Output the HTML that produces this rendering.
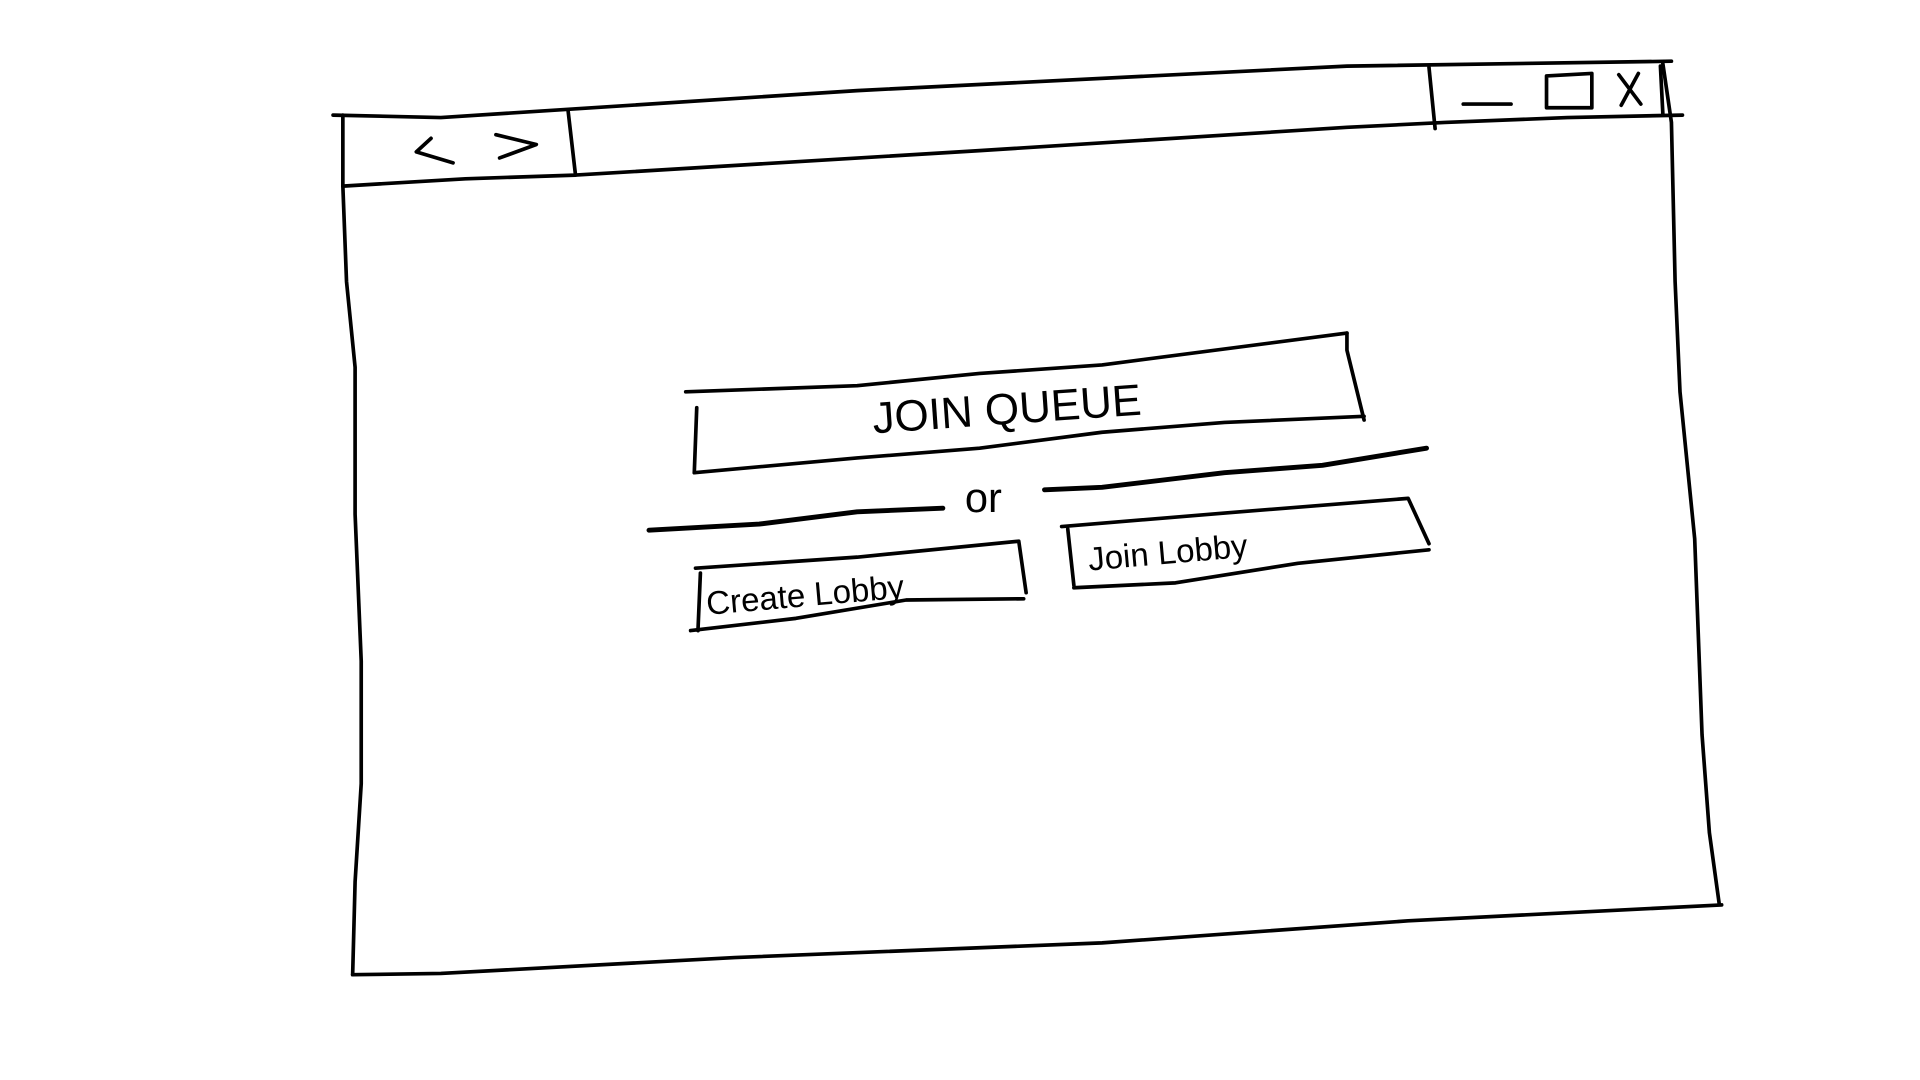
<!DOCTYPE html>
<html><head><meta charset="utf-8"><style>
html,body{margin:0;padding:0;background:#fff;width:1920px;height:1080px;overflow:hidden}
svg{display:block}
text{font-family:"Liberation Sans",sans-serif;fill:#000}
</style></head><body>
<svg width="1920" height="1080" viewBox="0 0 1568 882" preserveAspectRatio="none" fill="none" stroke="#000" stroke-width="3" stroke-linecap="round" stroke-linejoin="round">
<path d="M272 94 L360 96 L700 74 L1100 54 L1365 50"/>
<path d="M280 94 L280 152 L283 230 L290 300 L290 420 L295 540 L295 640 L290 720 L288 796"/>
<path d="M288 796 L360 795 L600 782 L900 770 L1150 752 L1406 739"/>
<path d="M1358 52 L1365 100 L1368 230 L1372 320 L1384 440 L1390 600 L1396 680 L1404 738"/>
<path d="M280 152 L380 146 L470 143 L800 123 L1100 104 L1180 100 L1280 96 L1374 94"/>
<path d="M464 91 L470 143"/>
<path d="M352 113 L340 124 L370 133"/>
<path d="M405 110 L438 118 L408 129"/>
<path d="M1167 55 L1172 105"/>
<path d="M1195 85 L1234 85"/>
<path d="M1263 62 L1300 60 L1300 88 L1263 88 Z"/>
<path d="M1322 61 L1340 85 M1338 60 L1324 86"/>
<path d="M1356 54 L1358 93"/>
<path d="M560 320 L700 315 L800 305 L900 298 L1100 272"/>
<path d="M569 333 L567 386"/>
<path d="M567 386 L700 374 L800 366 L900 353 L1000 345 L1114 340"/>
<path d="M1100 272 L1100 286 L1114 343"/>
<path d="M530 433 L620 428 L700 418 L770 415" stroke-width="4"/>
<path d="M853 400 L900 398 L1000 386 L1080 380 L1165 366" stroke-width="4"/>
<path d="M568 464 L700 455 L832 442 L838 484"/>
<path d="M572 468 L570 515"/>
<path d="M564 515 L650 505 L740 490 L836 489"/>
<path d="M867 430 L1000 419 L1150 407 L1167 444"/>
<path d="M872 432 L877 478"/>
<path d="M877 480 L960 476 L1060 460 L1167 449"/>
<g stroke="none">
<text x="712" y="345" font-size="36" transform="rotate(-4 840 330)">JOIN QUEUE</text>
<text x="788" y="418" font-size="34">or</text>
<text x="576" y="494" font-size="27" transform="rotate(-5 670 480)">Create Lobby</text>
<text x="888" y="458" font-size="27" transform="rotate(-5 980 445)">Join  Lobby</text>
</g>
</svg>
</body></html>
